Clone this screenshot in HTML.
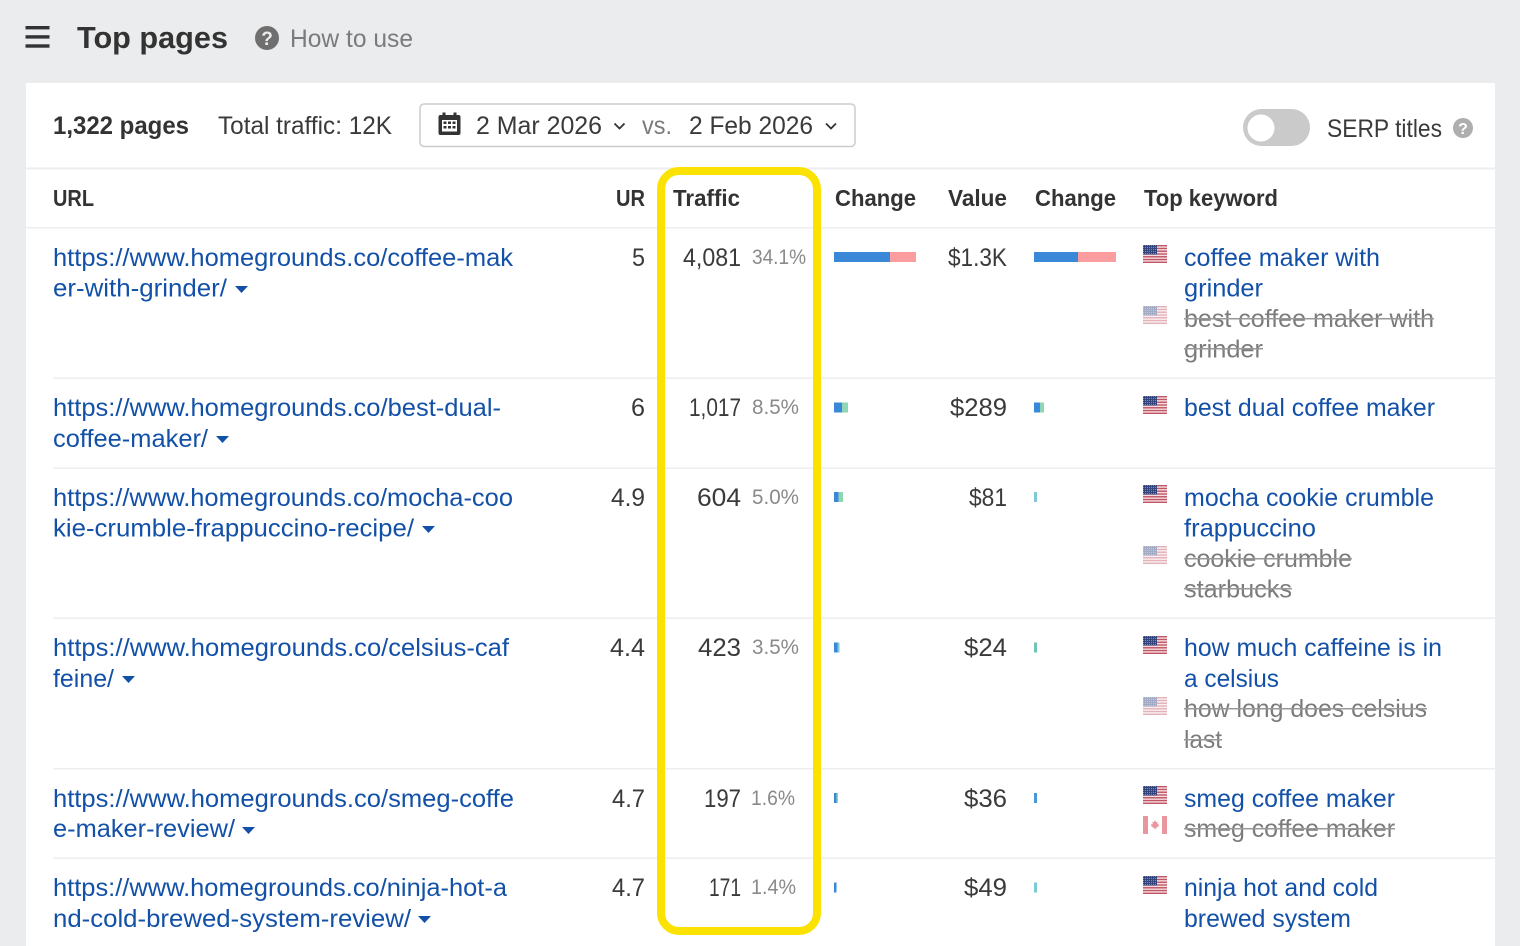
<!DOCTYPE html>
<html lang="en"><head><meta charset="utf-8"><title>Top pages</title>
<style>
html,body{margin:0;padding:0;width:1520px;height:946px;overflow:hidden;background:#ebecee}
svg{display:block}
text{font-family:"Liberation Sans",Arial,sans-serif;font-size:25px;fill:#3a3a3a;white-space:pre}
.b{font-weight:bold;fill:#333}
.l{fill:#1351a8}
.g{fill:#7b7b7b}
.p{font-size:21px;fill:#8a8a8a}
</style></head><body>
<svg width="1520" height="946" viewBox="0 0 1520 946" xmlns="http://www.w3.org/2000/svg">
<defs>
<pattern id="st" width="24" height="2.770" patternUnits="userSpaceOnUse"><rect width="24" height="2.770" fill="#f6dfe1"/><rect width="24" height="1.385" fill="#c05565"/></pattern>
<pattern id="dots" width="2" height="2" patternUnits="userSpaceOnUse"><rect width="2" height="2" fill="#34447c"/><rect width="1" height="1" fill="#7d89b0"/></pattern>
<g id="us">
<rect width="24" height="18" fill="url(#st)"/>
<rect width="14" height="9.500" fill="url(#dots)"/>
</g>
<g id="ca">
<rect width="24" height="18" fill="#fff"/>
<rect width="5" height="18" fill="#d7303f"/><rect x="19" width="5" height="18" fill="#d7303f"/>
<path d="M12 4l1.100 2.200 1.500-.6-.4 2.700 1.700-.7-.5 1.700.9.500-2.800 1.800-.3.900-1-.2V14h-.4v-1.700l-1 .2-.3-.9-2.800-1.800.9-.5-.5-1.700 1.700.7-.4-2.700 1.500.6z" fill="#d7303f"/>
</g>
<path id="tri" d="M0 0h13l-6.500 7z" fill="#1351a8"/>
</defs>

<rect width="1520" height="946" fill="#ebecee"/>
<!-- top bar -->
<rect x="25.500" y="26" width="24" height="3.400" fill="#333"/><rect x="25.500" y="35.200" width="24" height="3.400" fill="#333"/><rect x="25.500" y="44.300" width="24" height="3.400" fill="#333"/>
<text x="77" y="48" class="b" style="font-size:31px" textLength="151" lengthAdjust="spacingAndGlyphs">Top pages</text>
<circle cx="267" cy="38" r="12" fill="#6f6f6f"/>
<text x="267" y="45" text-anchor="middle" style="font-size:19px;font-weight:bold;fill:#ebecee">?</text>
<text x="290" y="47" class="g" textLength="123" lengthAdjust="spacingAndGlyphs">How to use</text>

<!-- card -->
<rect x="26" y="83" width="1469" height="863" fill="#fff"/>
<text x="53" y="134" class="b" textLength="136" lengthAdjust="spacingAndGlyphs">1,322 pages</text>
<text x="218" y="134" textLength="174" lengthAdjust="spacingAndGlyphs">Total traffic: 12K</text>
<rect x="420" y="104" width="435" height="42.500" rx="4" fill="#fff" stroke="#cccccc" stroke-width="1.500"/>
<!-- calendar -->
<path d="M440.500 115h2v-2.500h3v2.500h8v-2.500h3v2.500h2a2 2 0 0 1 2 2v16a2 2 0 0 1-2 2h-18a2 2 0 0 1-2-2v-16a2 2 0 0 1 2-2z" fill="#333"/>
<rect x="442" y="120" width="15" height="11.500" fill="#fff"/>
<path d="M443.500 121.500h3v2.500h-3zM448 121.500h3v2.500h-3zM452.500 121.500h3v2.500h-3zM443.500 126h3v2.500h-3zM448 126h3v2.500h-3zM452.500 126h3v2.500h-3z" fill="#333"/>
<text x="476" y="134" textLength="126" lengthAdjust="spacingAndGlyphs">2 Mar 2026</text>
<path d="M614.500 123.500l5 5 5-5" fill="none" stroke="#333" stroke-width="1.800"/>
<text x="642" y="134" class="g" textLength="30" lengthAdjust="spacingAndGlyphs">vs.</text>
<text x="689" y="134" textLength="124" lengthAdjust="spacingAndGlyphs">2 Feb 2026</text>
<path d="M826 123.500l5 5 5-5" fill="none" stroke="#333" stroke-width="1.800"/>
<rect x="1243" y="109" width="67" height="37" rx="18.500" fill="#cacaca"/>
<circle cx="1261" cy="128" r="13.500" fill="#fff"/>
<text x="1327" y="137" textLength="115" lengthAdjust="spacingAndGlyphs">SERP titles</text>
<circle cx="1463" cy="128" r="10" fill="#aeaeae"/>
<text x="1463" y="134" text-anchor="middle" style="font-size:16px;font-weight:bold;fill:#fff">?</text>

<!-- rules -->
<rect x="26" y="167.500" width="1469" height="2" fill="#eeeeee"/>
<rect x="26" y="227" width="1469" height="1.500" fill="#eeeeee"/>
<rect x="53" y="377.500" width="1442" height="1.500" fill="#eeeeee"/>
<rect x="53" y="467.500" width="1442" height="1.500" fill="#eeeeee"/>
<rect x="53" y="617.500" width="1442" height="1.500" fill="#eeeeee"/>
<rect x="53" y="768" width="1442" height="1.500" fill="#eeeeee"/>
<rect x="53" y="857.500" width="1442" height="1.500" fill="#eeeeee"/>

<!-- header -->
<g class="h">
<text x="53" y="206" class="b" style="font-size:23.500px" textLength="41" lengthAdjust="spacingAndGlyphs">URL</text>
<text x="616" y="206" class="b" style="font-size:23.500px" textLength="29" lengthAdjust="spacingAndGlyphs">UR</text>
<text x="673" y="206" class="b" style="font-size:23.500px" textLength="67" lengthAdjust="spacingAndGlyphs">Traffic</text>
<text x="835" y="206" class="b" style="font-size:23.500px" textLength="81" lengthAdjust="spacingAndGlyphs">Change</text>
<text x="948" y="206" class="b" style="font-size:23.500px" textLength="59" lengthAdjust="spacingAndGlyphs">Value</text>
<text x="1035" y="206" class="b" style="font-size:23.500px" textLength="81" lengthAdjust="spacingAndGlyphs">Change</text>
<text x="1144" y="206" class="b" style="font-size:23.500px" textLength="134" lengthAdjust="spacingAndGlyphs">Top keyword</text>
</g>

<!-- row 1 -->
<text x="53" y="266" class="l" textLength="460" lengthAdjust="spacingAndGlyphs">https://www.homegrounds.co/coffee-mak</text>
<text x="53" y="296.500" class="l" textLength="174" lengthAdjust="spacingAndGlyphs">er-with-grinder/</text>
<use href="#tri" x="235" y="286"/>
<text x="632" y="266" textLength="13" lengthAdjust="spacingAndGlyphs">5</text>
<text x="683" y="266" textLength="58" lengthAdjust="spacingAndGlyphs">4,081</text>
<text x="752" y="264" class="p" textLength="54" lengthAdjust="spacingAndGlyphs">34.1%</text>
<rect x="834" y="252" width="56" height="10" fill="#3b88d8"/><rect x="890" y="252" width="26" height="10" fill="#fb9c9f"/>
<text x="948" y="266" textLength="59" lengthAdjust="spacingAndGlyphs">$1.3K</text>
<rect x="1034" y="252" width="44" height="10" fill="#3b88d8"/><rect x="1078" y="252" width="38" height="10" fill="#fb9c9f"/>
<use href="#us" x="1143" y="245"/>
<text x="1184" y="266" class="l" textLength="196" lengthAdjust="spacingAndGlyphs">coffee maker with</text>
<text x="1184" y="296.500" class="l" textLength="79" lengthAdjust="spacingAndGlyphs">grinder</text>
<use href="#us" x="1143" y="306" opacity=".45"/>
<text x="1184" y="327" class="g" textLength="250" lengthAdjust="spacingAndGlyphs">best coffee maker with</text>
<rect x="1184" y="318" width="250" height="1.500" fill="#999"/>
<text x="1184" y="357.500" class="g" textLength="79" lengthAdjust="spacingAndGlyphs">grinder</text>
<rect x="1184" y="348" width="79" height="1.500" fill="#999"/>

<!-- row 2 -->
<text x="53" y="416" class="l" textLength="448" lengthAdjust="spacingAndGlyphs">https://www.homegrounds.co/best-dual-</text>
<text x="53" y="447" class="l" textLength="155" lengthAdjust="spacingAndGlyphs">coffee-maker/</text>
<use href="#tri" x="216" y="436"/>
<text x="631" y="416" textLength="14" lengthAdjust="spacingAndGlyphs">6</text>
<text x="689" y="416" textLength="52" lengthAdjust="spacingAndGlyphs">1,017</text>
<text x="752" y="414" class="p" textLength="47" lengthAdjust="spacingAndGlyphs">8.5%</text>
<rect x="834" y="402.500" width="8" height="10" fill="#3b88d8"/><rect x="842" y="402.500" width="6" height="10" fill="#8ed6b4"/>
<text x="950" y="416" textLength="57" lengthAdjust="spacingAndGlyphs">$289</text>
<rect x="1034" y="402.500" width="6" height="10" fill="#3b88d8"/><rect x="1040" y="402.500" width="4" height="10" fill="#8ed6b4"/>
<use href="#us" x="1143" y="396"/>
<text x="1184" y="416" class="l" textLength="251" lengthAdjust="spacingAndGlyphs">best dual coffee maker</text>

<!-- row 3 -->
<text x="53" y="506" class="l" textLength="460" lengthAdjust="spacingAndGlyphs">https://www.homegrounds.co/mocha-coo</text>
<text x="53" y="536.500" class="l" textLength="361" lengthAdjust="spacingAndGlyphs">kie-crumble-frappuccino-recipe/</text>
<use href="#tri" x="422" y="526"/>
<text x="611" y="506" textLength="34" lengthAdjust="spacingAndGlyphs">4.9</text>
<text x="697" y="506" textLength="44" lengthAdjust="spacingAndGlyphs">604</text>
<text x="752" y="504" class="p" textLength="47" lengthAdjust="spacingAndGlyphs">5.0%</text>
<rect x="834" y="492" width="4.500" height="10" fill="#3b88d8"/><rect x="838.500" y="492" width="4.500" height="10" fill="#8ed6b4"/>
<text x="969" y="506" textLength="38" lengthAdjust="spacingAndGlyphs">$81</text>
<rect x="1034" y="492" width="3" height="10" fill="#7fc8d6"/>
<use href="#us" x="1143" y="485"/>
<text x="1184" y="506" class="l" textLength="250" lengthAdjust="spacingAndGlyphs">mocha cookie crumble</text>
<text x="1184" y="536.500" class="l" textLength="132" lengthAdjust="spacingAndGlyphs">frappuccino</text>
<use href="#us" x="1143" y="546" opacity=".45"/>
<text x="1184" y="567" class="g" textLength="168" lengthAdjust="spacingAndGlyphs">cookie crumble</text>
<rect x="1184" y="558" width="168" height="1.500" fill="#999"/>
<text x="1184" y="597.500" class="g" textLength="108" lengthAdjust="spacingAndGlyphs">starbucks</text>
<rect x="1184" y="588" width="108" height="1.500" fill="#999"/>

<!-- row 4 -->
<text x="53" y="656" class="l" textLength="456" lengthAdjust="spacingAndGlyphs">https://www.homegrounds.co/celsius-caf</text>
<text x="53" y="687" class="l" textLength="61" lengthAdjust="spacingAndGlyphs">feine/</text>
<use href="#tri" x="122" y="676"/>
<text x="610" y="656" textLength="35" lengthAdjust="spacingAndGlyphs">4.4</text>
<text x="698" y="656" textLength="43" lengthAdjust="spacingAndGlyphs">423</text>
<text x="752" y="654" class="p" textLength="47" lengthAdjust="spacingAndGlyphs">3.5%</text>
<rect x="834" y="642.500" width="3.500" height="10" fill="#3b88d8"/><rect x="837.500" y="642.500" width="2" height="10" fill="#7fc8d6"/>
<text x="964" y="656" textLength="43" lengthAdjust="spacingAndGlyphs">$24</text>
<rect x="1034" y="642.500" width="3" height="10" fill="#6fc4b8"/>
<use href="#us" x="1143" y="636"/>
<text x="1184" y="656" class="l" textLength="258" lengthAdjust="spacingAndGlyphs">how much caffeine is in</text>
<text x="1184" y="687" class="l" textLength="95" lengthAdjust="spacingAndGlyphs">a celsius</text>
<use href="#us" x="1143" y="697" opacity=".45"/>
<text x="1184" y="717" class="g" textLength="243" lengthAdjust="spacingAndGlyphs">how long does celsius</text>
<rect x="1184" y="708" width="243" height="1.500" fill="#999"/>
<text x="1184" y="748" class="g" textLength="38" lengthAdjust="spacingAndGlyphs">last</text>
<rect x="1184" y="739" width="38" height="1.500" fill="#999"/>

<!-- row 5 -->
<text x="53" y="807" class="l" textLength="461" lengthAdjust="spacingAndGlyphs">https://www.homegrounds.co/smeg-coffe</text>
<text x="53" y="837" class="l" textLength="182" lengthAdjust="spacingAndGlyphs">e-maker-review/</text>
<use href="#tri" x="242" y="827"/>
<text x="612" y="807" textLength="33" lengthAdjust="spacingAndGlyphs">4.7</text>
<text x="704" y="807" textLength="37" lengthAdjust="spacingAndGlyphs">197</text>
<text x="751" y="805" class="p" textLength="44" lengthAdjust="spacingAndGlyphs">1.6%</text>
<rect x="834" y="793" width="2.500" height="10" fill="#3b88d8"/><rect x="836.500" y="793" width="1.500" height="10" fill="#8ed6b4"/>
<text x="964" y="807" textLength="43" lengthAdjust="spacingAndGlyphs">$36</text>
<rect x="1034" y="793" width="3" height="10" fill="#4a98d8"/>
<use href="#us" x="1143" y="786"/>
<text x="1184" y="807" class="l" textLength="211" lengthAdjust="spacingAndGlyphs">smeg coffee maker</text>
<use href="#ca" x="1143" y="816" opacity=".5"/>
<text x="1184" y="837" class="g" textLength="211" lengthAdjust="spacingAndGlyphs">smeg coffee maker</text>
<rect x="1184" y="828" width="211" height="1.500" fill="#999"/>

<!-- row 6 -->
<text x="53" y="896" class="l" textLength="454" lengthAdjust="spacingAndGlyphs">https://www.homegrounds.co/ninja-hot-a</text>
<text x="53" y="927" class="l" textLength="358" lengthAdjust="spacingAndGlyphs">nd-cold-brewed-system-review/</text>
<use href="#tri" x="418" y="916"/>
<text x="612" y="896" textLength="33" lengthAdjust="spacingAndGlyphs">4.7</text>
<text x="709" y="896" textLength="32" lengthAdjust="spacingAndGlyphs">171</text>
<text x="751" y="894" class="p" textLength="45" lengthAdjust="spacingAndGlyphs">1.4%</text>
<rect x="834" y="882.500" width="2.500" height="10" fill="#3b88d8"/>
<text x="964" y="896" textLength="43" lengthAdjust="spacingAndGlyphs">$49</text>
<rect x="1034" y="882.500" width="3" height="10" fill="#7fc8d6"/>
<use href="#us" x="1143" y="876"/>
<text x="1184" y="896" class="l" textLength="194" lengthAdjust="spacingAndGlyphs">ninja hot and cold</text>
<text x="1184" y="927" class="l" textLength="167" lengthAdjust="spacingAndGlyphs">brewed system</text>

<!-- highlight -->
<rect x="661" y="171" width="156" height="760" rx="18" fill="none" stroke="#fbe200" stroke-width="8"/>
</svg>
</body></html>
